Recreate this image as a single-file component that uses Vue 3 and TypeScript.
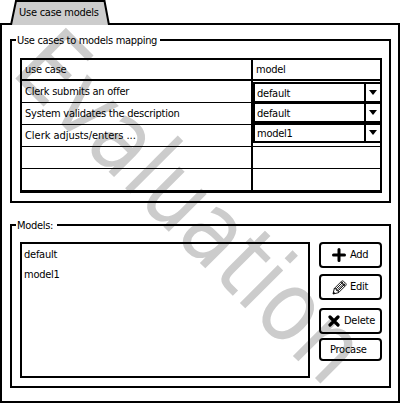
<script setup lang="ts">
const rows: string[] = [
  'Clerk submits an offer',
  'System validates the description',
  'Clerk adjusts/enters ...',
  '',
  '',
]
const choices: string[] = ['default', 'default', 'model1']
const models: string[] = ['default', 'model1']
</script>

<template>
  <main class="window">
    <svg class="watermark" viewBox="0 0 400 403" aria-hidden="true">
      <text transform="translate(9.5 72.5) rotate(45)" textLength="447" lengthAdjust="spacingAndGlyphs">Evaluation</text>
    </svg>
    <header class="tabs">
      <svg class="tab-shape" viewBox="0 0 100 25">
        <path d="M1 25 L6 1 H94.5 L99 25" fill="#ccc" stroke="#000" stroke-width="2" />
      </svg>
      <span class="tab-label">Use case models</span>
    </header>
    <section class="page">
      <section class="group mapping">
        <div class="legend"><i class="stub"></i><span class="legend-text">Use cases to models mapping</span><i class="rule"></i></div>
        <div class="table">
          <div class="names">
            <div class="cell head">use case</div>
            <div v-for="(row, i) in rows" :key="i" class="cell" :class="{ loose: row.endsWith('...') }">{{ row }}</div>
          </div>
          <div class="values">
            <div class="cell head">model</div>
            <div v-for="(row, i) in rows" :key="i" class="cell"></div>
            <div class="selects">
              <div v-for="(choice, i) in choices" :key="i" class="select">
                <span>{{ choice }}</span>
                <b class="arrow"><svg width="8" height="5" viewBox="0 0 8 5"><path d="M0 0H8L4 5Z" /></svg></b>
              </div>
            </div>
          </div>
        </div>
      </section>
      <section class="group models">
        <div class="legend"><i class="stub"></i><span class="legend-text">Models:</span><i class="rule"></i></div>
        <div class="content">
          <div class="list">
            <div v-for="model in models" :key="model">{{ model }}</div>
          </div>
          <div class="buttons">
            <button class="add">
              <svg width="14" height="14" viewBox="0 0 14 14"><path d="M7 1.5V12.5M1.5 7H12.5" stroke="#000" stroke-width="3" stroke-linecap="round" /></svg>
              <span>Add</span>
            </button>
            <button class="edit">
              <svg width="15" height="15" viewBox="0 0 15 15"><path d="M1 14L2.3 8.5L9.5 1.3Q10.5 .4 11.6 1.3L13.8 3.5Q14.6 4.5 13.7 5.5L6.5 12.7ZM2.3 8.5L4.2 8.8L4.5 10.5L6.2 10.8L6.5 12.7M4.2 8.8L11 2M5.2 10L12.5 3M6.2 10.8L13 4M8.8 2L13 6.2" fill="none" stroke="#000" stroke-width=".9" /><path d="M1 14L1.6 11.5L3.5 13.4Z" /></svg>
              <span>Edit</span>
            </button>
            <button class="delete">
              <svg width="12" height="12" viewBox="0 0 12 12"><path d="M2 2L10 10M10 2L2 10" stroke="#000" stroke-width="3.2" stroke-linecap="round" /></svg>
              <span>Delete</span>
            </button>
            <button class="procase"><span>Procase</span></button>
          </div>
        </div>
      </section>
    </section>
  </main>
</template>

<style>
body { margin: 0; background: #fff; overflow: hidden; }
</style>

<style scoped>
* { box-sizing: border-box; }
.window {
  position: relative;
  width: 400px;
  height: 403px;
  color: #000;
  background: #fff;
  font: 11px/14px "DejaVu Sans Condensed", "DejaVu Sans", sans-serif;
  font-stretch: condensed;
  letter-spacing: -.25px;
  white-space: nowrap;
}
.watermark { position: absolute; inset: 0; width: 400px; height: 403px; overflow: visible; }
.watermark text { font-family: "DejaVu Sans Condensed", "DejaVu Sans", sans-serif; font-size: 98px; letter-spacing: 0; fill: #ccc; }
.tabs { position: relative; z-index: 2; width: 100px; height: 25px; margin-left: 10px; margin-bottom: -2px; }
.tab-shape { display: block; width: 100px; height: 25px; }
.tab-label { position: absolute; left: 9px; top: 6px; }
.page { position: relative; height: 380px; border: 2px solid #000; padding: 14px 7px 0 8px; }
.group { border: 2px solid #000; border-top: 0; height: 164px; }
.models { margin-top: 21px; }
.legend { display: flex; height: 2px; margin: 0 -2px; align-items: center; }
.stub { width: 6px; height: 2px; background: #000; }
.rule { flex: 1; height: 2px; background: #000; }
.legend-text { width: 144px; padding: 2px 0 0 1px; letter-spacing: -.31px; }
.models .legend-text { width: 41px; }
.table { display: grid; grid-template-columns: 229px 129px; width: 362px; height: 135px; margin: 17px 0 0 8px; border: 2px solid #000; border-bottom-width: 3px; }
.values { position: relative; border-left: 2px solid #000; }
.cell { height: 22px; padding: 4px 0 0 3px; border-bottom: 1px solid #000; }
.cell.head { height: 21px; padding-top: 3px; border-bottom-width: 2px; }
.cell.loose { letter-spacing: -.04px; }
.cell:nth-child(6) { border-bottom: 0; }
.selects { position: absolute; left: 0; top: 22px; width: 129px; }
.select { display: flex; height: 21px; margin-bottom: -1px; border: 2px solid #000; line-height: 19px; }
.select span { flex: 1; padding-left: 2px; }
.arrow { width: 16px; border-left: 2px solid #000; display: flex; align-items: center; justify-content: center; }
.content { display: flex; justify-content: space-between; padding: 16px 7px 0 8px; }
.list { width: 290px; height: 136px; border: 2px solid #000; padding: 1px 2px; line-height: 20px; }
.buttons { width: 63px; display: flex; flex-direction: column; }
button { display: flex; align-items: center; height: 26px; width: 63px; padding: 0; border: 2px solid #000; border-radius: 4px; background: none; color: #000; font: inherit; letter-spacing: inherit; }
.add { padding-left: 11px; gap: 4px; }
.edit { margin-top: 6px; padding-left: 11px; gap: 3px; }
.delete { margin-top: 8px; padding-left: 7px; gap: 4px; }
.procase { margin-top: 4px; height: 23px; padding-left: 9px; }
</style>
